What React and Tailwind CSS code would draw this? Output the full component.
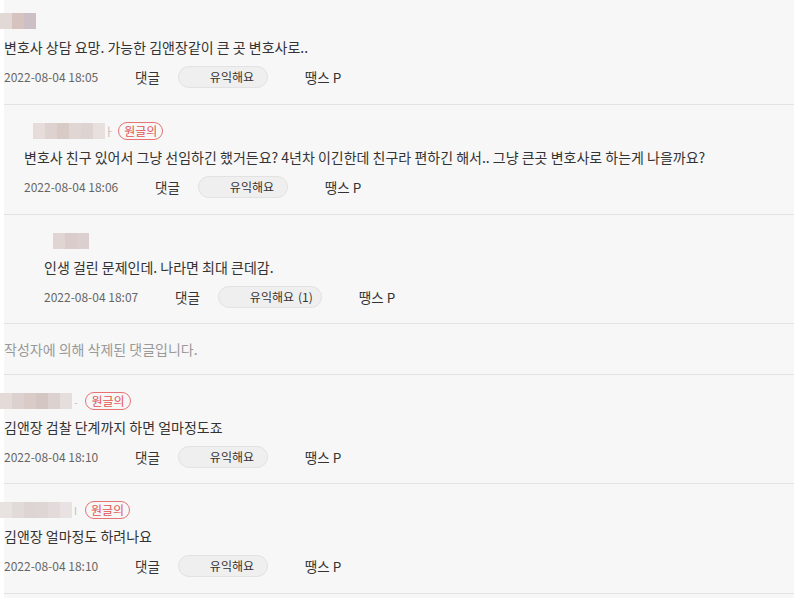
import React from "react";

const font = { fontFamily: '"Noto Sans CJK KR", "Noto Sans", sans-serif' };

function Blur({ blocks, className = "" }) {
  return (
    <div className={"flex h-[16px] blur-[0.6px] " + className}>
      {blocks.map((c, i) => (
        <div key={i} className="h-full w-[12px]" style={{ background: c }} />
      ))}
    </div>
  );
}

function Badge() {
  return (
    <span className="ml-[8px] flex h-[18px] items-center rounded-full border border-[#e57373] px-[5px] text-[12px] leading-none text-[#e05555]">
      원글의
    </span>
  );
}

function Meta({ date, count }) {
  return (
    <div className="flex h-[22px] items-center text-[13px] text-[#333]">
      <span className="w-[96px] text-[12px] text-[#666]">{date}</span>
      <span className="ml-[35px] text-[13.5px]">댓글</span>
      <span
        className={
          "ml-[18px] flex h-[22px] items-center rounded-full border border-[#e2e2e2] bg-[#efefef] pl-[31px] text-[12px] text-[#333] " +
          (count ? "w-[104px]" : "w-[90px]")
        }
      >
        유익해요{count ? <span className="ml-[4px]">{count}</span> : null}
      </span>
      <span className="ml-[37px] text-[13.5px]">땡스 P</span>
    </div>
  );
}

function Comment({ indent, name, badge, text, date, count, top = "pt-[17px]", bottom = "pb-[16px]" }) {
  return (
    <div className={"border-b border-[#e3e3e3] " + top + " " + bottom} style={{ paddingLeft: indent }}>
      <div className="flex h-[18px] items-center">
        {name}
        {badge ? <Badge /> : null}
      </div>
      <div className="mt-[7px] h-[20px] text-[14px] leading-[20px] text-[#333]">{text}</div>
      <div className="mt-[9px]">
        <Meta date={date} count={count} />
      </div>
    </div>
  );
}

export default function App() {
  return (
    <div className="h-[598px] w-[794px] overflow-hidden bg-white" style={font}>
      <div className="ml-[4px] h-full bg-[#f7f7f7]">
        <Comment
          indent={0}
          top="pt-[12px]"
          name={<Blur className="-ml-[4px] h-[10px]" blocks={["#e2d8d6", "#d6c3be", "#cdbfc6"]} />}
          text="변호사 상담 요망. 가능한 김앤장같이 큰 곳 변호사로.."
          date="2022-08-04 18:05"
        />
        <Comment
          indent={20}
          badge
          name={
            <div className="flex items-center">
              <Blur className="ml-[9px]" blocks={["#e6dcda", "#ddd2cf", "#d8cbc6", "#e0d6d3", "#ddd3d0", "#e8e0de"]} />
              <span className="-ml-[1px] -mr-[4px] text-[11px] text-[#bbb]">ㅏ</span>
            </div>
          }
          text="변호사 친구 있어서 그냥 선임하긴 했거든요? 4년차 이긴한데 친구라 편하긴 해서.. 그냥 큰곳 변호사로 하는게 나을까요?"
          date="2022-08-04 18:06"
        />
        <Comment
          indent={40}
          bottom="pb-[15px]"
          name={<Blur className="ml-[9px]" blocks={["#e0d5d3", "#d9ccca", "#dccfd0"]} />}
          text="인생 걸린 문제인데. 나라면 최대 큰데감."
          date="2022-08-04 18:07"
          count="(1)"
        />
        <div className="border-b border-[#e3e3e3] pb-[15px] pt-[15px]">
          <div className="h-[20px] text-[14px] leading-[20px] text-[#999]">작성자에 의해 삭제된 댓글입니다.</div>
        </div>
        <Comment
          indent={0}
          badge
          bottom="pb-[15px]"
          name={
            <div className="flex items-center">
              <Blur className="-ml-[4px]" blocks={["#e4dad8", "#ddd1cf", "#d9cbc8", "#d4c6c2", "#dcd1cf", "#e6dedc"]} />
              <span className="ml-[2px] text-[10px] text-[#bbb]">-</span>
            </div>
          }
          text="김앤장 검찰 단계까지 하면 얼마정도죠"
          date="2022-08-04 18:10"
        />
        <Comment
          indent={0}
          badge
          name={
            <div className="flex items-center">
              <Blur className="-ml-[4px]" blocks={["#e8e2e1", "#e0dad9", "#dcd5d4", "#ddd6d5", "#e2dbd9", "#e8e3e2"]} />
              <span className="ml-[2px] text-[10px] text-[#bbb]">I</span>
            </div>
          }
          text="김앤장 얼마정도 하려나요"
          date="2022-08-04 18:10"
        />
      </div>
    </div>
  );
}
